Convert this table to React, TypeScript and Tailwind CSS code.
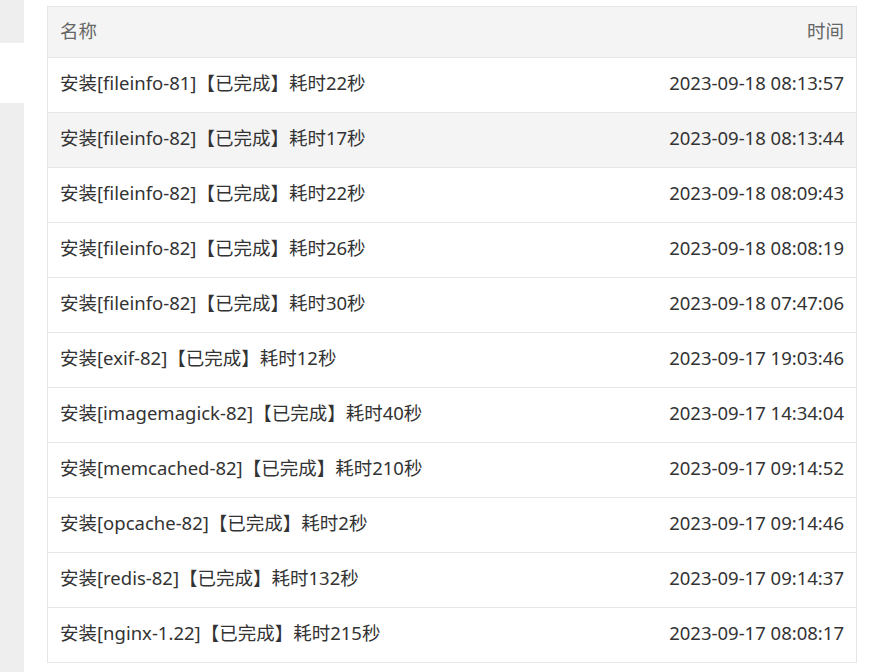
const rows = [
  ["安装[fileinfo-81]【已完成】耗时22秒", "2023-09-18 08:13:57"],
  ["安装[fileinfo-82]【已完成】耗时17秒", "2023-09-18 08:13:44"],
  ["安装[fileinfo-82]【已完成】耗时22秒", "2023-09-18 08:09:43"],
  ["安装[fileinfo-82]【已完成】耗时26秒", "2023-09-18 08:08:19"],
  ["安装[fileinfo-82]【已完成】耗时30秒", "2023-09-18 07:47:06"],
  ["安装[exif-82]【已完成】耗时12秒", "2023-09-17 19:03:46"],
  ["安装[imagemagick-82]【已完成】耗时40秒", "2023-09-17 14:34:04"],
  ["安装[memcached-82]【已完成】耗时210秒", "2023-09-17 09:14:52"],
  ["安装[opcache-82]【已完成】耗时2秒", "2023-09-17 09:14:46"],
  ["安装[redis-82]【已完成】耗时132秒", "2023-09-17 09:14:37"],
  ["安装[nginx-1.22]【已完成】耗时215秒", "2023-09-17 08:08:17"],
];

export default function App() {
  return (
    <div
      className="flex w-[872px] h-[672px] overflow-hidden bg-white text-[18.5px]"
      style={{ fontFamily: '"Noto Sans", "Noto Sans CJK SC", sans-serif' }}
    >
      {/* side strip */}
      <div className="flex flex-col w-[24px] shrink-0">
        <div className="h-[43px] bg-[#eeeeee]"></div>
        <div className="h-[60px] bg-white"></div>
        <div className="flex-1 bg-[#eeeeee]"></div>
      </div>

      {/* task list */}
      <div className="ml-[23px] mt-[6px] w-[810px] self-start border border-[#e6e6e6]">
        <div className="flex justify-between items-center h-[50px] px-[12px] pb-[2px] bg-[#f4f4f4] text-[#666]">
          <span>名称</span>
          <span>时间</span>
        </div>
        {rows.map((row, i) => (
          <div
            key={i}
            className={`flex justify-between items-center h-[55px] px-[12px] pb-[4px] border-t border-[#e6e6e6] text-[#333] ${
              i === 1 ? "bg-[#f4f4f4]" : "bg-white"
            }`}
          >
            <span>{row[0]}</span>
            <span>{row[1]}</span>
          </div>
        ))}
      </div>
    </div>
  );
}
